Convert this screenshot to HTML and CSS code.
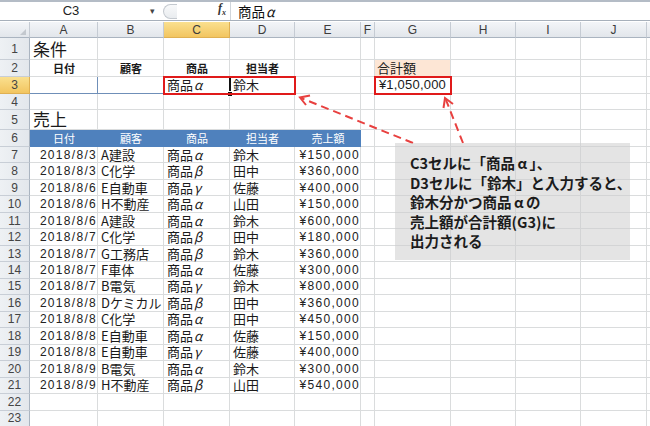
FILE: index.html
```html
<!DOCTYPE html>
<html lang="ja">
<head>
<meta charset="utf-8">
<title>Excel</title>
<link rel="stylesheet" href="styles.css">
</head>
<body>
<div class="app">
  <div class="fbar">
    <div class="namebox"><span>C3</span></div>
    <div class="nb-arrow">&#9662;</div>
    <div class="fx-area">
      <span class="grip"></span>
      <span class="fx">f<sub>x</sub></span>
    </div>
    <div class="finput">商品<i class="gk">α</i></div>
  </div>
  <div class="sheet">
    <div class="hd corner"></div><div class="hd">A</div><div class="hd">B</div><div class="hd sel">C</div><div class="hd">D</div><div class="hd">E</div><div class="hd">F</div><div class="hd">G</div><div class="hd">H</div><div class="hd">I</div><div class="hd">J</div><div class="hd"></div>

    <div class="rh">1</div><div class="c big">条件</div><div class="c"></div><div class="c"></div><div class="c"></div><div class="c"></div><div class="c"></div><div class="c"></div><div class="c"></div><div class="c"></div><div class="c"></div><div class="c"></div>

    <div class="rh">2</div><div class="c m b">日付</div><div class="c m b">顧客</div><div class="c m b">商品</div><div class="c m b">担当者</div><div class="c"></div><div class="c"></div><div class="c peach">合計額</div><div class="c"></div><div class="c"></div><div class="c"></div><div class="c"></div>

    <div class="rh sel">3</div><div class="c tb tbr"></div><div class="c tb"></div><div class="c">商品<i class="gk">α</i></div><div class="c">鈴木</div><div class="c"></div><div class="c"></div><div class="c r total">¥1,050,000</div><div class="c"></div><div class="c"></div><div class="c"></div><div class="c"></div>

    <div class="rh">4</div><div class="c"></div><div class="c"></div><div class="c"></div><div class="c"></div><div class="c"></div><div class="c"></div><div class="c"></div><div class="c"></div><div class="c"></div><div class="c"></div><div class="c"></div>

    <div class="rh">5</div><div class="c big">売上</div><div class="c"></div><div class="c"></div><div class="c"></div><div class="c"></div><div class="c"></div><div class="c"></div><div class="c"></div><div class="c"></div><div class="c"></div><div class="c"></div>

    <div class="rh">6</div><div class="c th">日付</div><div class="c th">顧客</div><div class="c th">商品</div><div class="c th">担当者</div><div class="c th">売上額</div><div class="c"></div><div class="c"></div><div class="c"></div><div class="c"></div><div class="c"></div><div class="c"></div>

    <div class="rh">7</div><div class="c r n">2018/8/3</div><div class="c">A建設</div><div class="c">商品<i class="gk">α</i></div><div class="c">鈴木</div><div class="c r n">¥150,000</div><div class="c"></div><div class="c"></div><div class="c"></div><div class="c"></div><div class="c"></div><div class="c"></div>
    <div class="rh">8</div><div class="c r n">2018/8/3</div><div class="c">C化学</div><div class="c">商品<i class="gk">β</i></div><div class="c">田中</div><div class="c r n">¥360,000</div><div class="c"></div><div class="c"></div><div class="c"></div><div class="c"></div><div class="c"></div><div class="c"></div>
    <div class="rh">9</div><div class="c r n">2018/8/6</div><div class="c">E自動車</div><div class="c">商品<i class="gk">γ</i></div><div class="c">佐藤</div><div class="c r n">¥400,000</div><div class="c"></div><div class="c"></div><div class="c"></div><div class="c"></div><div class="c"></div><div class="c"></div>
    <div class="rh">10</div><div class="c r n">2018/8/6</div><div class="c">H不動産</div><div class="c">商品<i class="gk">α</i></div><div class="c">山田</div><div class="c r n">¥150,000</div><div class="c"></div><div class="c"></div><div class="c"></div><div class="c"></div><div class="c"></div><div class="c"></div>
    <div class="rh">11</div><div class="c r n">2018/8/6</div><div class="c">A建設</div><div class="c">商品<i class="gk">α</i></div><div class="c">鈴木</div><div class="c r n">¥600,000</div><div class="c"></div><div class="c"></div><div class="c"></div><div class="c"></div><div class="c"></div><div class="c"></div>
    <div class="rh">12</div><div class="c r n">2018/8/7</div><div class="c">C化学</div><div class="c">商品<i class="gk">β</i></div><div class="c">田中</div><div class="c r n">¥180,000</div><div class="c"></div><div class="c"></div><div class="c"></div><div class="c"></div><div class="c"></div><div class="c"></div>
    <div class="rh">13</div><div class="c r n">2018/8/7</div><div class="c">G工務店</div><div class="c">商品<i class="gk">β</i></div><div class="c">鈴木</div><div class="c r n">¥360,000</div><div class="c"></div><div class="c"></div><div class="c"></div><div class="c"></div><div class="c"></div><div class="c"></div>
    <div class="rh">14</div><div class="c r n">2018/8/7</div><div class="c">F車体</div><div class="c">商品<i class="gk">α</i></div><div class="c">佐藤</div><div class="c r n">¥300,000</div><div class="c"></div><div class="c"></div><div class="c"></div><div class="c"></div><div class="c"></div><div class="c"></div>
    <div class="rh">15</div><div class="c r n">2018/8/7</div><div class="c">B電気</div><div class="c">商品<i class="gk">γ</i></div><div class="c">鈴木</div><div class="c r n">¥800,000</div><div class="c"></div><div class="c"></div><div class="c"></div><div class="c"></div><div class="c"></div><div class="c"></div>
    <div class="rh">16</div><div class="c r n">2018/8/8</div><div class="c">Dケミカル</div><div class="c">商品<i class="gk">β</i></div><div class="c">田中</div><div class="c r n">¥360,000</div><div class="c"></div><div class="c"></div><div class="c"></div><div class="c"></div><div class="c"></div><div class="c"></div>
    <div class="rh">17</div><div class="c r n">2018/8/8</div><div class="c">C化学</div><div class="c">商品<i class="gk">α</i></div><div class="c">田中</div><div class="c r n">¥450,000</div><div class="c"></div><div class="c"></div><div class="c"></div><div class="c"></div><div class="c"></div><div class="c"></div>
    <div class="rh">18</div><div class="c r n">2018/8/8</div><div class="c">E自動車</div><div class="c">商品<i class="gk">α</i></div><div class="c">佐藤</div><div class="c r n">¥150,000</div><div class="c"></div><div class="c"></div><div class="c"></div><div class="c"></div><div class="c"></div><div class="c"></div>
    <div class="rh">19</div><div class="c r n">2018/8/8</div><div class="c">E自動車</div><div class="c">商品<i class="gk">γ</i></div><div class="c">佐藤</div><div class="c r n">¥400,000</div><div class="c"></div><div class="c"></div><div class="c"></div><div class="c"></div><div class="c"></div><div class="c"></div>
    <div class="rh">20</div><div class="c r n">2018/8/9</div><div class="c">B電気</div><div class="c">商品<i class="gk">α</i></div><div class="c">鈴木</div><div class="c r n">¥300,000</div><div class="c"></div><div class="c"></div><div class="c"></div><div class="c"></div><div class="c"></div><div class="c"></div>
    <div class="rh">21</div><div class="c r n">2018/8/9</div><div class="c">H不動産</div><div class="c">商品<i class="gk">β</i></div><div class="c">山田</div><div class="c r n">¥540,000</div><div class="c"></div><div class="c"></div><div class="c"></div><div class="c"></div><div class="c"></div><div class="c"></div>
    <div class="rh">22</div><div class="c"></div><div class="c"></div><div class="c"></div><div class="c"></div><div class="c"></div><div class="c"></div><div class="c"></div><div class="c"></div><div class="c"></div><div class="c"></div><div class="c"></div>
    <div class="rh">23</div><div class="c"></div><div class="c"></div><div class="c"></div><div class="c"></div><div class="c"></div><div class="c"></div><div class="c"></div><div class="c"></div><div class="c"></div><div class="c"></div><div class="c"></div>
  </div>

  <div class="active-cell"><span class="handle"></span></div>
  <div class="redbox box-cd"></div>
  <div class="redbox box-g"></div>

  <svg class="arrows" width="650" height="426" viewBox="0 0 650 426">
    <g fill="none" stroke="#e8403f" stroke-width="2">
      <line x1="413" y1="143" x2="301" y2="98" stroke-dasharray="8 5"/>
      <polyline points="306,105 300,97.5 310,95.5"/>
      <line x1="463" y1="143" x2="446" y2="100" stroke-dasharray="8 5"/>
      <polyline points="443.5,108 445,98 453,104"/>
    </g>
  </svg>

  <div class="callout">
    <p>C3セルに「商品<span class="fw">α</span>」、</p>
    <p>D3セルに「鈴木」と入力すると、</p>
    <p>鈴木分かつ商品<span class="fw">α</span>の</p>
    <p>売上額が合計額(G3)に</p>
    <p>出力される</p>
  </div>
</div>
</body>
</html>
```

FILE: styles.css
```css
* { box-sizing: border-box; }
html, body { margin: 0; padding: 0; background: #fff; }
body {
  font-family: "Noto Sans CJK JP", "Liberation Sans", sans-serif;
  color: #1a1a1a;
}
.app {
  position: relative;
  width: 650px;
  height: 426px;
  overflow: hidden;
  background: #fff;
}

/* formula bar */
.fbar {
  display: flex;
  align-items: center;
  height: 21px;
  border-top: 2px solid #b4bcc6;
  border-bottom: 1px solid #a7b0bb;
  background: #fff;
  margin-bottom: 1px;
  line-height: 16px;
}
.namebox {
  width: 142px;
  display: flex;
  justify-content: center;
  font-family: "Liberation Sans", sans-serif;
  font-size: 13px;
  color: #222;
}
.nb-arrow {
  width: 20px;
  font-size: 9px;
  color: #444;
  text-align: center;
}
.fx-area {
  width: 68px;
  display: flex;
  align-items: center;
  justify-content: space-between;
  padding: 0 4px 0 1px;
  height: 100%;
}
.grip {
  width: 14px;
  height: 15px;
  border: 1px solid #c4c9cf;
  border-right: none;
  border-radius: 8px 0 0 8px;
  background: linear-gradient(#f8f9fa, #e9ecef);
}
.fx {
  font-family: "Liberation Serif", serif;
  font-style: italic;
  font-weight: bold;
  font-size: 12px;
  color: #333;
}
.fx sub { font-size: 8px; }
.finput {
  flex: 1;
  height: 100%;
  border-left: 1px solid #d0d5db;
  padding-left: 7px;
  display: flex;
  align-items: center;
  font-size: 13.5px;
  color: #111;
}
.gk {
  font-style: italic;
  padding-left: 1px;
  padding-right: 1px;
}

/* sheet */
.sheet {
  display: grid;
  grid-template-columns: 30px 68px 66px 66px 65px 66px 14px 76px 65px 65px 66px 30px;
  grid-template-rows: 16px 22px 17px 17px 16px 20px 17px repeat(17, 16.47px);
}
.hd {
  background: linear-gradient(#f3f5f8, #e2e6eb);
  border-right: 1px solid #c5cbd3;
  border-bottom: 1px solid #aab4c0;
  font-family: "Liberation Sans", sans-serif;
  font-size: 12px;
  line-height: 14px;
  color: #3c3c3c;
  display: flex;
  align-items: center;
  justify-content: center;
}
.hd.sel, .rh.sel {
  background: linear-gradient(#fae08f, #f2c560);
  border-color: #dfb052;
}
.corner { position: relative; }
.corner::after {
  content: "";
  position: absolute;
  right: 3px;
  bottom: 2px;
  border-left: 6px solid transparent;
  border-bottom: 6px solid #c3c8ce;
}
.rh {
  background: linear-gradient(90deg, #eef1f4, #e3e7ec);
  border-right: 1px solid #aab4c0;
  border-bottom: 1px solid #c8ced6;
  font-family: "Liberation Sans", sans-serif;
  font-size: 12px;
  line-height: 14px;
  color: #444;
  display: flex;
  align-items: center;
  justify-content: center;
}
.c {
  border-right: 1px solid #dadcdd;
  border-bottom: 1px solid #dadcdd;
  display: flex;
  align-items: center;
  padding: 0 2px 0 3px;
  white-space: nowrap;
  font-size: 13px;
  line-height: 14px;
  color: #1a1a1a;
  min-width: 0;
}
.c.r { justify-content: flex-end; padding: 0 0 0 2px; }
.c.m { justify-content: center; }
.c.b { font-weight: bold; font-size: 11px; }
.c.n {
  font-family: "Liberation Sans", sans-serif;
  font-size: 12px;
  letter-spacing: 1.3px;
  color: #222;
}
.c.big {
  font-size: 17px;
  align-items: flex-end;
  padding-bottom: 0;
  line-height: 20px;
}
.c.peach { background: #fde6d5; font-size: 13px; padding-left: 2px; }
.c.total {
  font-family: "Liberation Sans", sans-serif;
  font-size: 13px;
  letter-spacing: 0.2px;
  padding-right: 4px;
}
.c.tb { border-bottom-color: #6f8fb8; }
.c.tbr { border-right-color: #6f8fb8; }
.c.th {
  background: #4f81bd;
  border-color: #4f81bd;
  color: #fff;
  justify-content: center;
  font-size: 11px;
}

/* overlays */
.active-cell {
  position: absolute;
  left: 163px;
  top: 76px;
  width: 68px;
  height: 19px;
  border: 2px solid #111;
}
.handle {
  position: absolute;
  right: -4px;
  bottom: -4px;
  width: 6px;
  height: 6px;
  background: #111;
  border: 1px solid #fff;
}
.redbox {
  position: absolute;
  border: 2px solid #e01a1a;
}
.box-cd { left: 163px; top: 76px; width: 133px; height: 19px; }
.box-g { left: 374px; top: 76px; width: 78px; height: 19px; }
.arrows {
  position: absolute;
  left: 0;
  top: 0;
  pointer-events: none;
}
.callout {
  position: absolute;
  left: 395px;
  top: 143px;
  width: 235px;
  height: 117px;
  background: rgba(205, 205, 205, 0.55);
  padding: 10px 0 0 15px;
  font-weight: bold;
  font-size: 14.5px;
  line-height: 19.5px;
  color: #1c1c1c;
}
.callout p { margin: 0; white-space: nowrap; }
.fw {
  display: inline-block;
  width: 1em;
  text-align: center;
}
```
